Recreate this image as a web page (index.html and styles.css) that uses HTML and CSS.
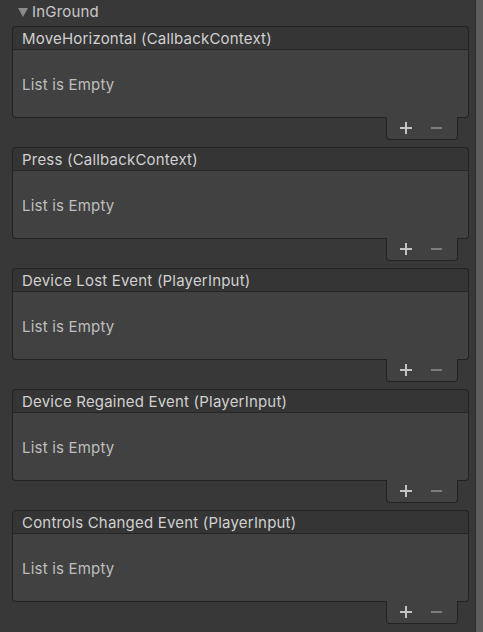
FILE: index.html
```html
<!DOCTYPE html>
<html>
<head>
<meta charset="utf-8">
<link rel="stylesheet" href="styles.css">
</head>
<body>
<div class="page">
  <div class="content">
    <div class="foldout"><span class="tri"></span><span class="fold-label">InGround</span></div>
    <div class="lists">
      <div class="rlist">
        <div class="rl-head">MoveHorizontal (CallbackContext)</div>
        <div class="rl-body">List is Empty</div>
        <div class="rl-foot"><span class="plus">+</span><span class="minus"></span></div>
      </div>
      <div class="rlist">
        <div class="rl-head">Press (CallbackContext)</div>
        <div class="rl-body">List is Empty</div>
        <div class="rl-foot"><span class="plus">+</span><span class="minus"></span></div>
      </div>
      <div class="rlist">
        <div class="rl-head">Device Lost Event (PlayerInput)</div>
        <div class="rl-body">List is Empty</div>
        <div class="rl-foot"><span class="plus">+</span><span class="minus"></span></div>
      </div>
      <div class="rlist">
        <div class="rl-head">Device Regained Event (PlayerInput)</div>
        <div class="rl-body">List is Empty</div>
        <div class="rl-foot"><span class="plus">+</span><span class="minus"></span></div>
      </div>
      <div class="rlist">
        <div class="rl-head">Controls Changed Event (PlayerInput)</div>
        <div class="rl-body">List is Empty</div>
        <div class="rl-foot"><span class="plus">+</span><span class="minus"></span></div>
      </div>
    </div>
  </div>
  <div class="scrollbar"></div>
</div>
</body>
</html>
```

FILE: styles.css
```css
* {
  box-sizing: border-box;
}
html, body {
  margin: 0;
  padding: 0;
  background: #383838;
}
body {
  font-family: Inter, "Noto Sans", sans-serif;
  font-size: 15px;
  letter-spacing: 0.2px;
  color: #c8c8c8;
}
.page {
  display: flex;
  height: 632px;
  overflow: hidden;
}
.content {
  flex: 1;
  padding: 0 6px 0 12px;
}
.scrollbar {
  width: 8px;
  background: #5d5d5d;
  border-left: 1px solid #303030;
}
.foldout {
  height: 24px;
  display: flex;
  align-items: center;
  margin-left: 6px;
  gap: 4px;
  padding-bottom: 1px;
}
.tri {
  width: 0;
  height: 0;
  border-left: 5px solid transparent;
  border-right: 5px solid transparent;
  border-top: 9px solid #8a8a8a;
  margin-top: 1px;
}
.fold-label {
  color: #c8c8c8;
}
.lists {
  display: flex;
  flex-direction: column;
  gap: 7px;
  margin-top: 2px;
}
.rlist {
  display: flex;
  flex-direction: column;
}
.rl-head {
  height: 24px;
  background: #353535;
  border: 1px solid #232323;
  border-bottom: 1px solid #262626;
  border-radius: 4px 4px 0 0;
  padding-left: 9px;
  display: flex;
  align-items: center;
  color: #d0d0d0;
}
.rl-body {
  height: 68px;
  background: #414141;
  border: 1px solid #232323;
  border-top: none;
  border-radius: 0 0 4px 4px;
  padding-left: 9px;
  padding-top: 2px;
  display: flex;
  align-items: center;
  color: #bebebe;
}
.rl-foot {
  align-self: flex-end;
  margin-right: 11px;
  margin-top: -1px;
  width: 72px;
  height: 23px;
  background: #414141;
  border: 1px solid #232323;
  border-top: none;
  border-radius: 0 0 4px 4px;
  display: flex;
  align-items: center;
  padding-bottom: 1px;
}
.plus {
  width: 12px;
  height: 12px;
  margin-left: 13px;
  position: relative;
  font-size: 0;
}
.plus::before, .plus::after {
  content: "";
  position: absolute;
  background: #c4c4c4;
}
.plus::before {
  left: 0;
  top: 5px;
  width: 12px;
  height: 2px;
}
.plus::after {
  left: 5px;
  top: 0;
  width: 2px;
  height: 12px;
}
.minus {
  width: 11px;
  height: 2px;
  background: #7c7c7c;
  margin-left: 19px;
}
```
